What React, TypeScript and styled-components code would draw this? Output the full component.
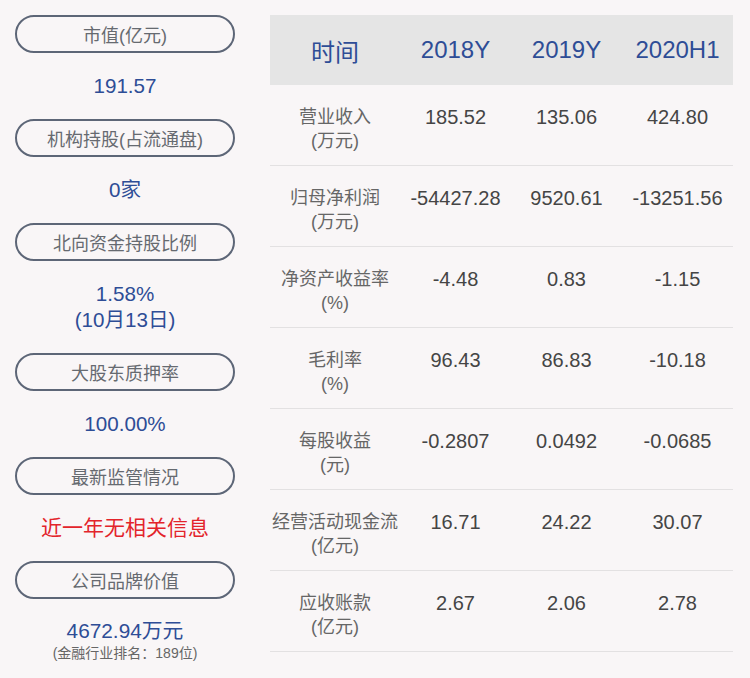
import React from "react";
import styled, { createGlobalStyle } from "styled-components";

const Global = createGlobalStyle`
  html, body { margin: 0; padding: 0; background: #f9f6f7; }
  body { font-family: "Liberation Sans", "Noto Sans CJK SC", sans-serif; }
`;

const Page = styled.div`
  display: flex;
  align-items: flex-start;
  gap: 35px;
  padding: 15px 17px 0 15px;
  width: 750px;
  height: 678px;
  box-sizing: border-box;
`;

const Left = styled.div`
  width: 220px;
  display: flex;
  flex-direction: column;
`;

const Pill = styled.div`
  height: 38px;
  box-sizing: border-box;
  border: 2px solid #5d6677;
  border-radius: 19px;
  display: flex;
  align-items: center;
  justify-content: center;
  font-size: 18px;
  color: #666a70;
`;

const ValueBox = styled.div`
  padding: 20px 0;
  display: flex;
  flex-direction: column;
  align-items: center;
  text-align: center;
`;

const Value = styled.div<{ $red?: boolean }>`
  font-size: ${(p) => (p.$red ? "21px" : "20.6px")};
  line-height: 26px;
  color: ${(p) => (p.$red ? "#e3242b" : "#2e4d96")};
`;

const BrandValue = styled.div`
  font-size: 20.8px;
  line-height: 24px;
  color: #2e4d96;
`;

const Note = styled.div`
  font-size: 14px;
  line-height: 20px;
  color: #666;
`;

const Table = styled.div`
  width: 463px;
  display: grid;
  grid-template-columns: 130px repeat(3, 1fr);
`;

const HeadCell = styled.div`
  height: 70px;
  background: #e5e5e5;
  display: flex;
  align-items: center;
  justify-content: center;
  font-size: 24px;
  color: #2e4d96;
`;

const Cell = styled.div<{ $label?: boolean }>`
  height: 80px;
  box-sizing: content-box;
  border-bottom: 1px solid #e3e1e2;
  padding-top: 0;
  display: flex;
  flex-direction: column;
  align-items: center;
  text-align: center;
  font-size: ${(p) => (p.$label ? "18px" : "20px")};
  line-height: 24px;
  color: ${(p) => (p.$label ? "#666" : "#454545")};
  padding-top: 20px;
  height: 60px;
  white-space: nowrap;
`;

const leftItems: { label: string; values: string[]; red?: boolean }[] = [
  { label: "市值(亿元)", values: ["191.57"] },
  { label: "机构持股(占流通盘)", values: ["0家"] },
  { label: "北向资金持股比例", values: ["1.58%", "(10月13日)"] },
  { label: "大股东质押率", values: ["100.00%"] },
  { label: "最新监管情况", values: ["近一年无相关信息"], red: true },
];

const rows: { label: string; unit: string; v: string[] }[] = [
  { label: "营业收入", unit: "(万元)", v: ["185.52", "135.06", "424.80"] },
  { label: "归母净利润", unit: "(万元)", v: ["-54427.28", "9520.61", "-13251.56"] },
  { label: "净资产收益率", unit: "(%)", v: ["-4.48", "0.83", "-1.15"] },
  { label: "毛利率", unit: "(%)", v: ["96.43", "86.83", "-10.18"] },
  { label: "每股收益", unit: "(元)", v: ["-0.2807", "0.0492", "-0.0685"] },
  { label: "经营活动现金流", unit: "(亿元)", v: ["16.71", "24.22", "30.07"] },
  { label: "应收账款", unit: "(亿元)", v: ["2.67", "2.06", "2.78"] },
];

export default function App() {
  return (
    <>
      <Global />
      <Page>
        <Left>
          {leftItems.map((it) => (
            <React.Fragment key={it.label}>
              <Pill>{it.label}</Pill>
              <ValueBox>
                {it.values.map((v) => (
                  <Value key={v} $red={it.red}>
                    {v}
                  </Value>
                ))}
              </ValueBox>
            </React.Fragment>
          ))}
          <Pill>公司品牌价值</Pill>
          <ValueBox>
            <BrandValue>4672.94万元</BrandValue>
            <Note>(金融行业排名：189位)</Note>
          </ValueBox>
        </Left>
        <Table>
          <HeadCell>时间</HeadCell>
          <HeadCell>2018Y</HeadCell>
          <HeadCell>2019Y</HeadCell>
          <HeadCell>2020H1</HeadCell>
          {rows.map((r) => (
            <React.Fragment key={r.label}>
              <Cell $label>
                <span>{r.label}</span>
                <span>{r.unit}</span>
              </Cell>
              {r.v.map((v, i) => (
                <Cell key={i}>{v}</Cell>
              ))}
            </React.Fragment>
          ))}
        </Table>
      </Page>
    </>
  );
}
